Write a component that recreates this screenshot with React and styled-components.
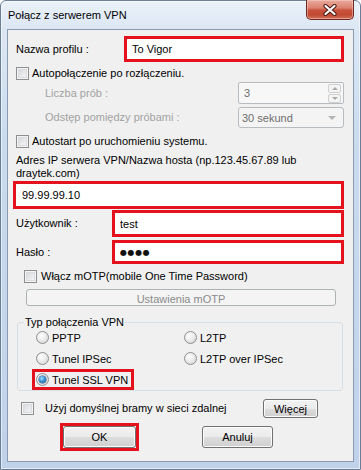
import React from 'react';
import styled, { createGlobalStyle } from 'styled-components';

const GlobalStyle = createGlobalStyle`
  body {
    margin: 0;
    background: #fff;
    font-family: "Liberation Sans", Arial, sans-serif;
    font-size: 11px;
    color: #000;
  }
`;

const Window = styled.div`
  width: 361px;
  height: 470px;
  box-sizing: border-box;
  border: 1px solid #6b7e98;
  border-radius: 6px 6px 0 0;
  background: linear-gradient(
    to bottom,
    #eaf1f9 0px,
    #dce7f4 28px,
    #cadbee 140px,
    #bfd2ea 100%
  );
  box-shadow: inset 0 0 0 1px rgba(255, 255, 255, 0.55);
  display: flex;
  flex-direction: column;
`;

const TitleBar = styled.div`
  height: 28px;
  flex-shrink: 0;
  display: flex;
  align-items: flex-start;
  justify-content: space-between;
`;

const Title = styled.div`
  padding: 7px 0 0 7px;
  line-height: 15px;
  font-size: 11px;
  color: #000;
`;

const CloseButton = styled.div`
  width: 48px;
  height: 20px;
  margin: -1px 6px 0 0;
  box-sizing: border-box;
  border: 1px solid #6e2a20;
  border-top: none;
  border-radius: 0 0 5px 5px;
  background: linear-gradient(
    to bottom,
    #e9aa9c 0%,
    #dc8371 40%,
    #c7503b 55%,
    #c24a33 80%,
    #d0735c 100%
  );
  box-shadow: inset 0 0 0 1px rgba(255, 220, 210, 0.45);
  display: flex;
  align-items: center;
  justify-content: center;
`;

const Panel = styled.div`
  margin: 0 6px 7px 6px;
  height: 433px;
  box-sizing: border-box;
  border: 1px solid #8b9ab0;
  background: #f0f0f0;
  padding: 0 9px 0 8px;
  display: flex;
  flex-direction: column;
`;

const Row = styled.div`
  display: flex;
  align-items: center;
  flex-shrink: 0;
  height: ${(p) => p.$h}px;
  margin-top: ${(p) => p.$mt || 0}px;
  margin-left: ${(p) => p.$ml || 0}px;
  padding-left: ${(p) => p.$indent || 0}px;
`;

const Label = styled.div`
  width: ${(p) => (p.$w ? `${p.$w}px` : 'auto')};
  flex-shrink: 0;
  color: ${(p) => (p.$disabled ? '#a2a2a2' : '#000')};
  line-height: ${(p) => p.$lh || 15}px;
  margin-left: ${(p) => p.$ml || 0}px;
`;

const RedField = styled.div`
  flex: 1;
  height: 100%;
  box-sizing: border-box;
  border: 3px solid #e3121c;
  background: #fff;
  display: flex;
  align-items: center;
  padding-left: ${(p) => p.$pl || 5}px;
  color: #000;
`;

const Dots = styled.span`
  font-family: "DejaVu Sans", sans-serif;
  font-size: 8px;
  letter-spacing: 0.6px;
  color: #111;
`;

const CheckBox = styled.span`
  width: 13px;
  height: 13px;
  box-sizing: border-box;
  flex-shrink: 0;
  border: 1px solid #8e8f8f;
  background: linear-gradient(135deg, #cdd1d6 0%, #e9eaec 55%, #f8f8f8 100%);
  box-shadow: inset 0 0 0 1px #f4f4f4, inset 0 0 0 2px #dadcdf;
  margin-left: ${(p) => p.$ml || 0}px;
  margin-right: ${(p) => p.$gap || 3}px;
`;

const Radio = styled.span`
  width: 13px;
  height: 13px;
  box-sizing: border-box;
  flex-shrink: 0;
  border-radius: 50%;
  border: 1px solid #8e8f8f;
  background: radial-gradient(circle at 40% 35%, #ffffff 0%, #f0f0f0 35%, #cfcfcf 100%);
  display: flex;
  align-items: center;
  justify-content: center;
  margin-right: 3px;
  &::after {
    content: '';
    display: ${(p) => (p.$checked ? 'block' : 'none')};
    width: 7px;
    height: 7px;
    border-radius: 50%;
    background: radial-gradient(circle at 40% 35%, #a9e1ff 0%, #3a95d6 45%, #0f4d86 100%);
    box-shadow: 0 0 0 0.5px #1a4b78;
  }
`;

const SpinBox = styled.div`
  width: 106px;
  height: 100%;
  margin-left: auto;
  box-sizing: border-box;
  border: 1px solid #b7bcc1;
  border-radius: 2px;
  background: #f7f7f7;
  display: flex;
  align-items: center;
  justify-content: space-between;
  padding: 0 2px 0 5px;
  color: #6d6d6d;
`;

const SpinButtons = styled.div`
  display: flex;
  flex-direction: column;
  gap: 1px;
  height: 19px;
`;

const SpinArrow = styled.div`
  width: 13px;
  height: 9px;
  box-sizing: border-box;
  border: 1px solid #cfcfcf;
  border-radius: 2px;
  background: #f4f4f4;
  display: flex;
  align-items: center;
  justify-content: center;
  &::after {
    content: '';
    border-left: 3px solid transparent;
    border-right: 3px solid transparent;
    ${(p) => (p.$up ? 'border-bottom: 3px solid #a9a9a9;' : 'border-top: 3px solid #a9a9a9;')}
  }
`;

const Select = styled.div`
  width: 106px;
  height: 100%;
  margin-left: auto;
  box-sizing: border-box;
  border: 1px solid #b7bcc1;
  border-radius: 3px;
  background: #f4f4f4;
  display: flex;
  align-items: center;
  justify-content: space-between;
  padding: 0 7px 0 3px;
  color: #6d6d6d;
  &::after {
    content: '';
    border-left: 4px solid transparent;
    border-right: 4px solid transparent;
    border-top: 4px solid #b3b3b3;
  }
`;

const Button = styled.div`
  box-sizing: border-box;
  width: ${(p) => (p.$w ? `${p.$w}px` : 'auto')};
  height: ${(p) => p.$h}px;
  flex-shrink: 0;
  border: 1px solid #707070;
  border-radius: 3px;
  background: linear-gradient(to bottom, #f2f2f2 0%, #ebebeb 50%, #dddddd 51%, #cfcfcf 100%);
  box-shadow: inset 0 0 0 1px #fcfcfc;
  display: flex;
  align-items: center;
  justify-content: center;
  color: #000;
  margin-left: ${(p) => p.$ml || 0}px;
`;

const DisabledButton = styled.div`
  flex: 1;
  height: 100%;
  box-sizing: border-box;
  margin: 0 8px 0 10px;
  border: 1px solid #adb2b5;
  border-radius: 3px;
  background: #f4f4f4;
  display: flex;
  align-items: center;
  justify-content: center;
  padding-top: 2px;
  color: #8a8a8a;
`;

const RedWrap = styled.div`
  box-sizing: border-box;
  width: ${(p) => p.$w}px;
  height: 100%;
  border: 3px solid #e3121c;
  margin-left: ${(p) => p.$ml || 0}px;
  display: flex;
  align-items: center;
  & > * {
    flex: 1;
  }
`;

const Group = styled.fieldset`
  margin: 9px 1px 0 1px;
  padding: 0;
  border: 1px solid #d5dfe5;
  border-radius: 3px;
  flex-shrink: 0;
`;

const Legend = styled.legend`
  margin-left: 6px;
  padding: 0 1px;
  line-height: 14px;
  color: #000;
`;

const RadioGrid = styled.div`
  display: grid;
  grid-template-columns: 148px auto;
  grid-auto-rows: 21px;
  padding-left: 14px;
  margin-top: -2px;
`;

const RadioItem = styled.div`
  justify-self: start;
  box-sizing: border-box;
  height: 21px;
  display: flex;
  align-items: center;
  border: 3px solid ${(p) => (p.$marked ? '#e3121c' : 'transparent')};
  padding: 0 3px 0 1px;
`;

const radios = [
  { label: 'PPTP' },
  { label: 'L2TP' },
  { label: 'Tunel IPSec' },
  { label: 'L2TP over IPSec' },
  { label: 'Tunel SSL VPN', checked: true },
];

export default function App() {
  return (
    <>
      <GlobalStyle />
      <Window>
        <TitleBar>
          <Title>Połącz z serwerem VPN</Title>
          <CloseButton>
            <svg width="14" height="12" viewBox="0 0 14 12">
              <path d="M2.5 2 L11.5 10 M11.5 2 L2.5 10" stroke="#4b1a12" strokeWidth="4.2" strokeLinecap="round" />
              <path d="M2.5 2 L11.5 10 M11.5 2 L2.5 10" stroke="#ffffff" strokeWidth="2.2" strokeLinecap="round" />
            </svg>
          </CloseButton>
        </TitleBar>
        <Panel>
          <Row $h={26} $mt={6}>
            <Label $w={108}>Nazwa profilu :</Label>
            <RedField>To Vigor</RedField>
          </Row>
          <Row $h={14} $mt={4}>
            <CheckBox />
            <Label>Autopołączenie po rozłączeniu.</Label>
          </Row>
          <Row $h={22} $mt={2} $indent={29}>
            <Label $disabled>Liczba prób :</Label>
            <SpinBox>
              3
              <SpinButtons>
                <SpinArrow $up />
                <SpinArrow />
              </SpinButtons>
            </SpinBox>
          </Row>
          <Row $h={21} $mt={3} $indent={29}>
            <Label $disabled>Odstęp pomiędzy próbami :</Label>
            <Select>30 sekund</Select>
          </Row>
          <Row $h={14} $mt={6}>
            <CheckBox />
            <Label>Autostart po uruchomieniu systemu.</Label>
          </Row>
          <Row $h={26} $mt={6}>
            <Label $lh={13}>
              Adres IP serwera VPN/Nazwa hosta (np.123.45.67.89 lub
              <br />
              draytek.com)
            </Label>
          </Row>
          <Row $h={28} $mt={1} $ml={-3}>
            <RedField $pl={6}>99.99.99.10</RedField>
          </Row>
          <Row $h={27} $mt={1}>
            <Label $w={96}>Użytkownik :</Label>
            <RedField>test</RedField>
          </Row>
          <Row $h={24} $mt={3}>
            <Label $w={96}>Hasło :</Label>
            <RedField>
              <Dots>●●●●</Dots>
            </RedField>
          </Row>
          <Row $h={14} $mt={5}>
            <CheckBox $ml={8} $gap={4} />
            <Label>Włącz mOTP(mobile One Time Password)</Label>
          </Row>
          <Row $h={17} $mt={6}>
            <DisabledButton>Ustawienia mOTP</DisabledButton>
          </Row>
          <Group>
            <Legend>Typ połączenia VPN</Legend>
            <RadioGrid>
              {radios.map((r) => (
                <RadioItem key={r.label} $marked={r.checked}>
                  <Radio $checked={r.checked} />
                  {r.label}
                </RadioItem>
              ))}
            </RadioGrid>
          </Group>
          <Row $h={19} $mt={8}>
            <CheckBox $ml={5} $gap={11} />
            <Label>Użyj domyślnej bramy w sieci zdalnej</Label>
            <Button $w={55} $h={19} style={{ marginLeft: 'auto', marginRight: 26 }}>
              Więcej
            </Button>
          </Row>
          <Row $h={28} $mt={5}>
            <RedWrap $w={79} $ml={44}>
              <Button $h={22}>OK</Button>
            </RedWrap>
            <Button $w={71} $h={22} $ml={63}>
              Anuluj
            </Button>
          </Row>
        </Panel>
      </Window>
    </>
  );
}
